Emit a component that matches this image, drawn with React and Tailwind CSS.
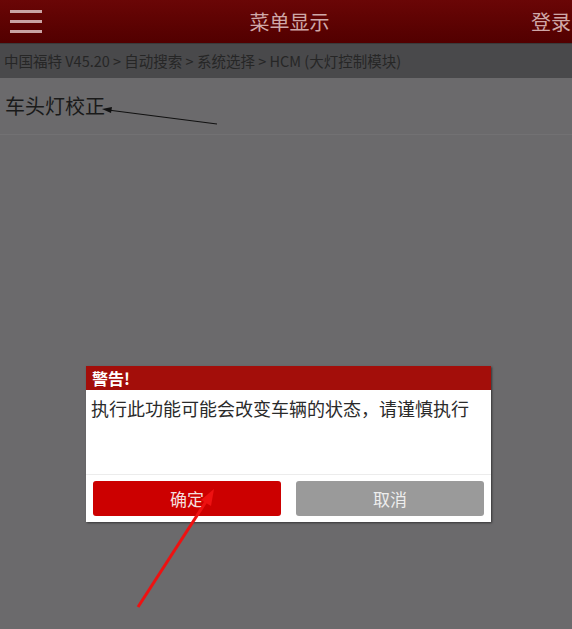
const FONT = { fontFamily: '"Noto Sans CJK SC", "Noto Sans", sans-serif' }

const App = () => {
  return (
    <div className="relative w-[572px] h-[629px] overflow-hidden bg-[#6b6a6c]" style={FONT}>
      {/* Header */}
      <div className="h-[43px] bg-gradient-to-b from-[#6a0606] to-[#520000] flex items-center px-[10px] relative">
        <div className="flex flex-col gap-[7px] w-[32px]">
          <div className="h-[3px] bg-[#c9a3a3]" />
          <div className="h-[3px] bg-[#c9a3a3]" />
          <div className="h-[3px] bg-[#c9a3a3]" />
        </div>
        <div className="flex-1 text-center text-[20px] text-[#cfa8a8] ml-[6px]">菜单显示</div>
        <div className="text-[20px] text-[#cfa8a8] -mr-[9px]">登录</div>
      </div>

      {/* Breadcrumb */}
      <div className="h-[35px] bg-[#49494b] flex items-center px-[4px] text-[14.5px] text-[#262626] border-t border-[#3a3a3a]">
        中国福特 V45.20 &gt; 自动搜索 &gt; 系统选择 &gt; HCM (大灯控制模块)
      </div>

      {/* Menu row */}
      <div className="h-[57px] flex items-center px-[5px] text-[20px] text-[#1a1a1a] border-b border-[#727173]">
        车头灯校正
      </div>

      {/* Dialog */}
      <div className="absolute left-[86px] top-[366px] w-[405px] h-[156px] bg-white shadow-[1px_1px_2px_rgba(0,0,0,0.5)] flex flex-col">
        <div className="h-[24px] bg-[#a30e0a] flex items-center px-[6px] text-[16px] font-bold text-white">警告!</div>
        <div className="h-[85px] px-[5px] pt-[5px] text-[18px] text-[#2a2a2a] border-b border-[#ececec] whitespace-nowrap">
          执行此功能可能会改变车辆的状态，请谨慎执行
        </div>
        <div className="flex-1 flex gap-[15px] px-[7px] pt-[6px] pb-[6px]">
          <div className="flex-1 rounded-[3px] bg-[#cc0000] flex items-center justify-center text-[17px] text-[#f4dede]">确定</div>
          <div className="flex-1 rounded-[3px] bg-[#9a9a9a] flex items-center justify-center text-[17px] text-[#eeeeee]">取消</div>
        </div>
      </div>

      {/* Annotation arrows */}
      <svg className="absolute left-0 top-0 pointer-events-none" width="572" height="629">
        <line x1="217" y1="124" x2="108" y2="110" stroke="#111" strokeWidth="1.2" />
        <polygon points="102,109 112,107 111,113" fill="#111" />
        <line x1="138" y1="607" x2="207" y2="500" stroke="#ee1111" strokeWidth="3" />
        <polygon points="214,489 201,500 211,506" fill="#ee1111" />
      </svg>
    </div>
  )
}

export default App
